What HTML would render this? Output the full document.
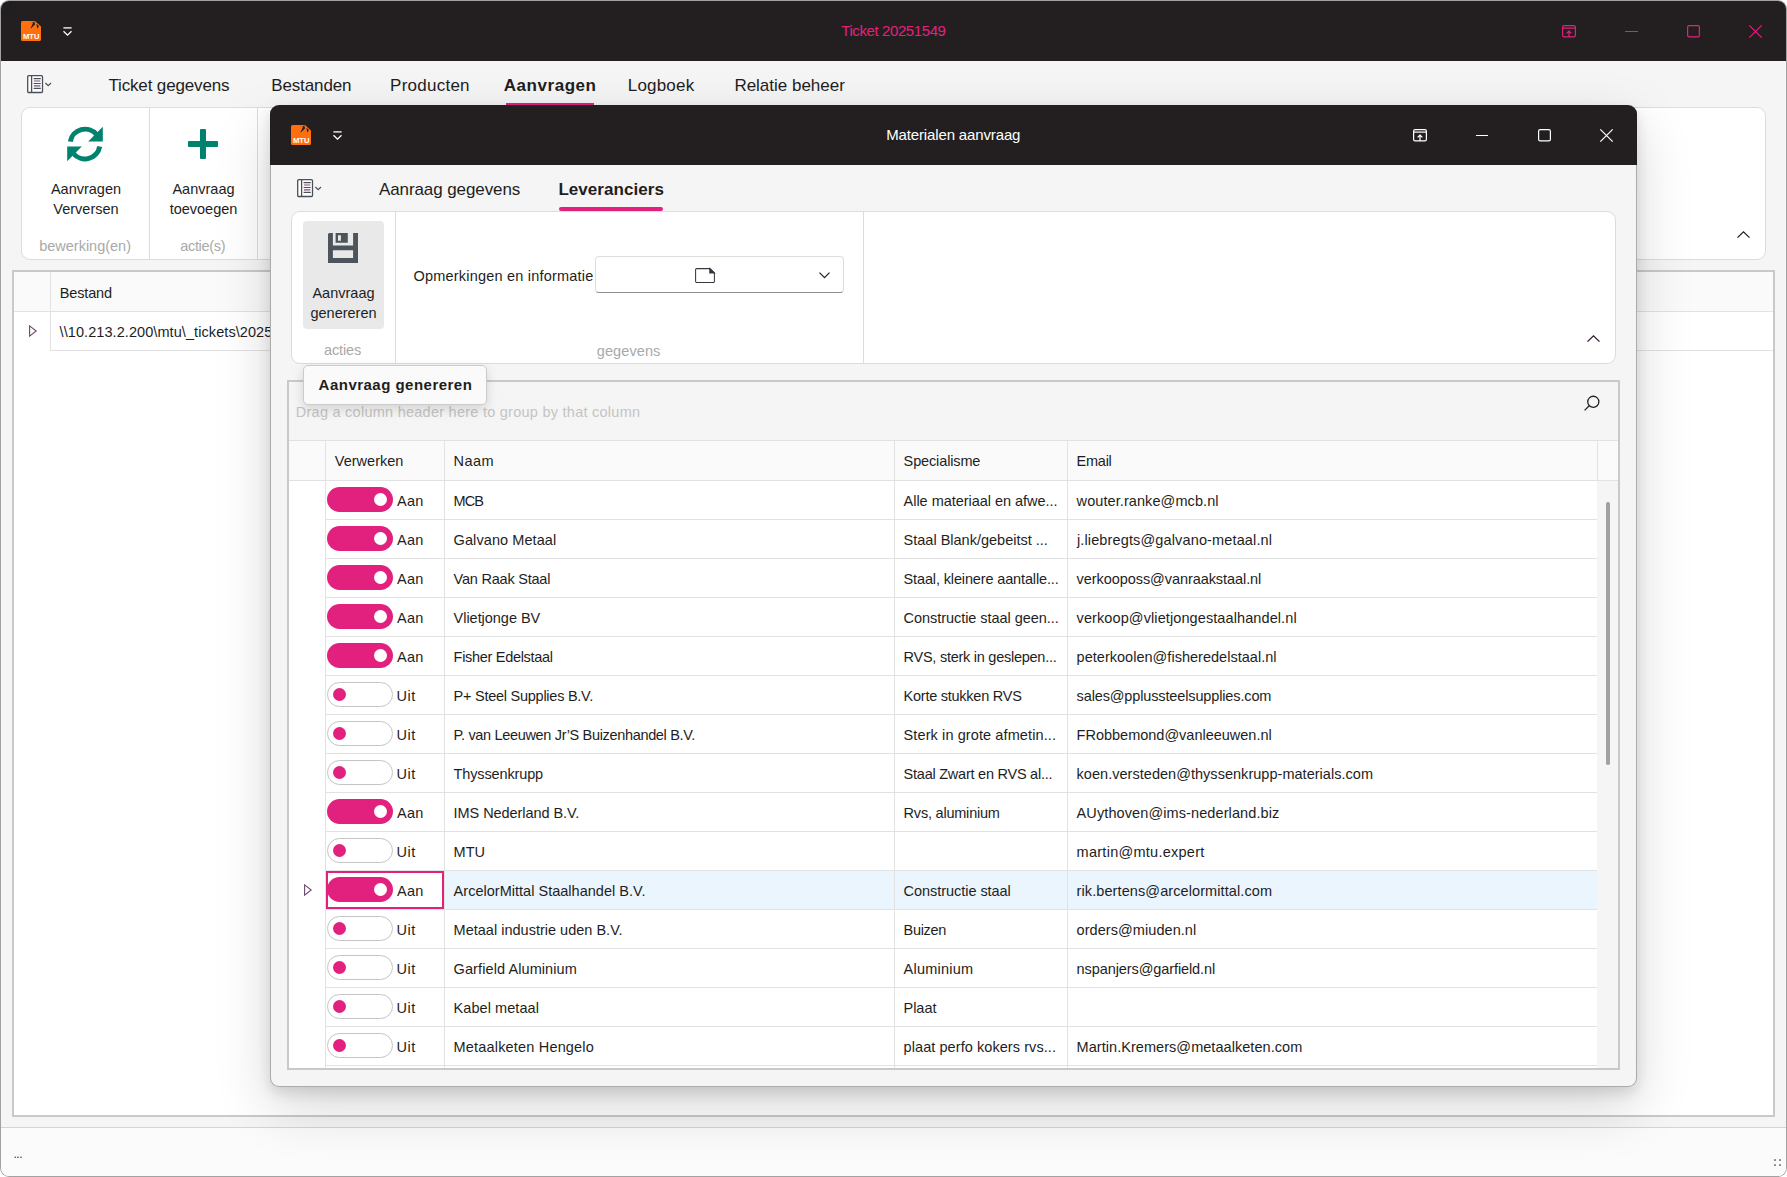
<!DOCTYPE html><html><head><meta charset="utf-8"><title>Ticket 20251549</title><style>
*{box-sizing:border-box;margin:0;padding:0}
html,body{width:1787px;height:1177px;overflow:hidden;background:#fff}
body{position:relative;font-family:"Liberation Sans",sans-serif;color:#1e1e1e}
.a{position:absolute}
.t{position:absolute;white-space:pre}
svg{position:absolute;overflow:visible}
.hl{position:absolute;height:1px;background:#e2e2e2}
.vl{position:absolute;width:1px;background:#e2e2e2}
.tg{position:absolute;width:66px;height:25px;border-radius:13px}
.tg.on{background:#e2217f}
.tg.off{background:#fff;border:1px solid #c4c4c4}
.kn{position:absolute;width:13px;height:13px;border-radius:50%}
</style></head><body>
<div class="a" style="left:0;top:0;width:1787px;height:1177px;border-radius:9px;background:#a2a2a2"></div>
<div class="a" style="left:1px;top:1px;width:1785px;height:1175px;border-radius:8px;background:#f5f5f5;overflow:hidden">
<div class="a" style="left:0;top:0;width:1785px;height:59.5px;background:#231f20"></div>
</div>
<svg style="left:21px;top:21px" width="20" height="20" viewBox="0 0 20 20"><path d="M1.6 0H14L20 5.6V18.4a1.6 1.6 0 0 1-1.6 1.6H1.6A1.6 1.6 0 0 1 0 18.4V1.6A1.6 1.6 0 0 1 1.6 0Z" fill="#ff6f0d"/><path d="M9.2 8 12.2 1.6 9.8 2.2 13.4 0.6 14 3.4ZM16.2 7.4 15.4 2.8 17.4 4.6 17.8 5.6Z" fill="#231f20"/><text x="10.2" y="17.9" font-family="Liberation Sans" font-weight="700" font-size="7.6" fill="#fff" text-anchor="middle" textLength="16.6" lengthAdjust="spacingAndGlyphs">MTU</text></svg>
<svg style="left:62.5px;top:26.8px" width="9" height="9" viewBox="0 0 9 9" fill="none" stroke="#fff" stroke-width="1.3"><path d="M0.4 0.9H8.6"/><path d="M0.5 4.2 4.5 8.1 8.5 4.2"/></svg>
<div class="t" style="left:841.2px;top:19.3px;height:24px;line-height:24px;font-size:15px;color:#e2217f;letter-spacing:-0.399px;">Ticket 20251549</div>
<svg style="left:1562px;top:25.2px" width="14" height="12.5" viewBox="0 0 14 12.5" fill="none" stroke="#e2217f" stroke-width="1.2"><rect x="0.6" y="0.6" width="12.8" height="11.3" rx="1.6"/><path d="M0.6 3.1H13.4"/><path d="M7 12V6.2M4.6 8.4 7 6 9.4 8.4"/></svg>
<div class="a" style="left:1625.3px;top:31.2px;width:12.6px;height:1.3px;background:#e2217f"></div>
<svg style="left:1687.2px;top:25.2px" width="13" height="12.5" viewBox="0 0 13 12.5" fill="none" stroke="#e2217f" stroke-width="1.2"><rect x="0.6" y="0.6" width="11.8" height="11.3" rx="1.6"/></svg>
<svg style="left:1749.2px;top:24.7px" width="13" height="13" viewBox="0 0 13 13" fill="none" stroke="#e2217f" stroke-width="1.2"><path d="M0.3 0.3 12.7 12.7M12.7 0.3 0.3 12.7"/></svg>
<svg style="left:27px;top:75px" width="25" height="18" viewBox="0 0 25 18" fill="none"><rect x="0.7" y="0.7" width="14.8" height="16.8" rx="1.1" fill="#fff" stroke="#4a5057" stroke-width="1.3"/><path d="M4.6 0.6V17.4" stroke="#4a5057" stroke-width="1.3"/><path d="M6.6 3.6H13.8M6.6 8.5H13.8M6.6 13.4H13.8" stroke="#4a5057" stroke-width="1.1"/><path d="M6.9 6H13.3M6.9 10.9H13.3" stroke="#7a4a7a" stroke-width="1.1"/><path d="M18.4 8 21.2 10.7 24 8" stroke="#5a4a5f" stroke-width="1.2"/></svg>
<div class="t" style="left:108.4px;top:74.0px;height:24px;line-height:24px;font-size:17px;letter-spacing:-0.138px;">Ticket gegevens</div>
<div class="t" style="left:271.2px;top:74.0px;height:24px;line-height:24px;font-size:17px;letter-spacing:-0.119px;">Bestanden</div>
<div class="t" style="left:390.1px;top:74.0px;height:24px;line-height:24px;font-size:17px;letter-spacing:0.243px;">Producten</div>
<div class="t" style="left:503.8px;top:74.0px;height:24px;line-height:24px;font-size:17px;font-weight:700;letter-spacing:0.534px;">Aanvragen</div>
<div class="t" style="left:627.8px;top:74.0px;height:24px;line-height:24px;font-size:17px;letter-spacing:0.185px;">Logboek</div>
<div class="t" style="left:734.4px;top:74.0px;height:24px;line-height:24px;font-size:17px;letter-spacing:-0.01px;">Relatie beheer</div>
<div class="a" style="left:505.5px;top:102.8px;width:88px;height:3px;background:#e2217f"></div>
<div class="a" style="left:21px;top:107px;width:1745px;height:153px;background:#fff;border:1px solid #dcdcdc;border-radius:9px"></div>
<div class="vl" style="left:149px;top:108px;height:151px;background:#dcdcdc"></div>
<div class="vl" style="left:257px;top:108px;height:151px;background:#dcdcdc"></div>
<svg style="left:67px;top:126px" width="36" height="36" viewBox="0 0 36 36"><path d="M3.3 15.6A15 15 0 0 1 29.6 8.6" fill="none" stroke="#00826f" stroke-width="5"/><path d="M35.8 0.8V15.6H21.2Z" fill="#00826f"/><path d="M32.7 20.5A15 15 0 0 1 6.4 27.5" fill="none" stroke="#00826f" stroke-width="5"/><path d="M0.2 35.3V20.5H14.8Z" fill="#00826f"/></svg>
<div class="a" style="left:188px;top:141.3px;width:30px;height:5.5px;border-radius:1px;background:#00826f"></div>
<div class="a" style="left:200.2px;top:129px;width:5.5px;height:30px;border-radius:1px;background:#00826f"></div>
<div class="t" style="left:22px;top:177.0px;height:24px;line-height:24px;font-size:14.5px;width:128px;text-align:center;">Aanvragen</div>
<div class="t" style="left:22px;top:196.7px;height:24px;line-height:24px;font-size:14.5px;width:128px;text-align:center;">Verversen</div>
<div class="t" style="left:150px;top:177.0px;height:24px;line-height:24px;font-size:14.5px;width:107px;text-align:center;">Aanvraag</div>
<div class="t" style="left:150px;top:196.7px;height:24px;line-height:24px;font-size:14.5px;width:107px;text-align:center;">toevoegen</div>
<div class="t" style="left:39.2px;top:234.0px;height:24px;line-height:24px;font-size:14.5px;color:#a9a9a9;letter-spacing:-0.005px;">bewerking(en)</div>
<div class="t" style="left:180.2px;top:234.0px;height:24px;line-height:24px;font-size:14.5px;color:#a9a9a9;letter-spacing:-0.302px;">actie(s)</div>
<svg style="left:1736.5px;top:230.8px" width="13" height="7" viewBox="0 0 13 7" fill="none" stroke="#2a1a2a" stroke-width="1.3"><path d="M0.5 6.6 6.5 0.8 12.5 6.6"/></svg>
<div class="a" style="left:12px;top:270px;width:1763px;height:847px;background:#fff;border:2px solid #c9c9c9"></div>
<div class="a" style="left:14px;top:272px;width:1759px;height:39px;background:#fafafa"></div>
<div class="hl" style="left:14px;top:311px;width:1759px"></div>
<div class="vl" style="left:50px;top:272px;height:79px"></div>
<div class="hl" style="left:50px;top:350px;width:1723px"></div>
<div class="t" style="left:59.8px;top:280.6px;height:24px;line-height:24px;font-size:14.5px;letter-spacing:-0.164px;">Bestand</div>
<div class="t" style="left:59.6px;top:320.2px;height:24px;line-height:24px;font-size:14.5px;letter-spacing:0.075px;">\\10.213.2.200\mtu\_tickets\2025</div>
<svg style="left:28.5px;top:325px" width="8" height="12" viewBox="0 0 8 12" fill="none" stroke="#6a4a6a" stroke-width="1.1"><path d="M0.6 0.9 7.2 6 0.6 11.1Z"/></svg>
<div class="a" style="left:1px;top:1127px;width:1785px;height:1px;background:#d4d4d4"></div>
<div class="a" style="left:1px;top:1128px;width:1785px;height:48px;background:#fbfbfb;border-radius:0 0 8px 8px"></div>
<div class="t" style="left:13.5px;top:1142.3px;height:24px;line-height:24px;font-size:12px;color:#333;letter-spacing:-0.5px;">...</div>
<div class="a" style="left:1774.4px;top:1159px;width:2px;height:2px;background:#8c8c8c;border-radius:0.5px"></div>
<div class="a" style="left:1774.4px;top:1164px;width:2px;height:2px;background:#8c8c8c;border-radius:0.5px"></div>
<div class="a" style="left:1779px;top:1159px;width:2px;height:2px;background:#8c8c8c;border-radius:0.5px"></div>
<div class="a" style="left:1779px;top:1164px;width:2px;height:2px;background:#8c8c8c;border-radius:0.5px"></div>
<div class="a" style="left:270px;top:105px;width:1367px;height:982px;border-radius:9px;background:#ababab;box-shadow:0 6px 14px rgba(0,0,0,0.12),0 20px 56px rgba(0,0,0,0.16);overflow:hidden">
<div class="a" style="left:1px;top:0;width:1365px;height:981px;border-radius:8px;background:#f5f5f5"></div>
<div class="a" style="left:0;top:0;width:1367px;height:60px;background:#231f20"></div>
</div>
<svg style="left:291px;top:125px" width="20" height="20" viewBox="0 0 20 20"><path d="M1.6 0H14L20 5.6V18.4a1.6 1.6 0 0 1-1.6 1.6H1.6A1.6 1.6 0 0 1 0 18.4V1.6A1.6 1.6 0 0 1 1.6 0Z" fill="#ff6f0d"/><path d="M9.2 8 12.2 1.6 9.8 2.2 13.4 0.6 14 3.4ZM16.2 7.4 15.4 2.8 17.4 4.6 17.8 5.6Z" fill="#231f20"/><text x="10.2" y="17.9" font-family="Liberation Sans" font-weight="700" font-size="7.6" fill="#fff" text-anchor="middle" textLength="16.6" lengthAdjust="spacingAndGlyphs">MTU</text></svg>
<svg style="left:332.5px;top:131px" width="9" height="9" viewBox="0 0 9 9" fill="none" stroke="#fff" stroke-width="1.3"><path d="M0.4 0.9H8.6"/><path d="M0.5 4.2 4.5 8.1 8.5 4.2"/></svg>
<div class="t" style="left:886.2px;top:123.4px;height:24px;line-height:24px;font-size:15px;color:#fff;letter-spacing:-0.138px;">Materialen aanvraag</div>
<svg style="left:1412.5px;top:129.2px" width="14" height="12.5" viewBox="0 0 14 12.5" fill="none" stroke="#fff" stroke-width="1.2"><rect x="0.6" y="0.6" width="12.8" height="11.3" rx="1.6"/><path d="M0.6 3.1H13.4"/><path d="M7 12V6.2M4.6 8.4 7 6 9.4 8.4"/></svg>
<div class="a" style="left:1475.8px;top:135.2px;width:12.6px;height:1.3px;background:#fff"></div>
<svg style="left:1537.7px;top:129.2px" width="13" height="12.5" viewBox="0 0 13 12.5" fill="none" stroke="#fff" stroke-width="1.2"><rect x="0.6" y="0.6" width="11.8" height="11.3" rx="1.6"/></svg>
<svg style="left:1599.7px;top:128.7px" width="13" height="13" viewBox="0 0 13 13" fill="none" stroke="#fff" stroke-width="1.2"><path d="M0.3 0.3 12.7 12.7M12.7 0.3 0.3 12.7"/></svg>
<svg style="left:297px;top:179px" width="25" height="18" viewBox="0 0 25 18" fill="none"><rect x="0.7" y="0.7" width="14.8" height="16.8" rx="1.1" fill="#fff" stroke="#4a5057" stroke-width="1.3"/><path d="M4.6 0.6V17.4" stroke="#4a5057" stroke-width="1.3"/><path d="M6.6 3.6H13.8M6.6 8.5H13.8M6.6 13.4H13.8" stroke="#4a5057" stroke-width="1.1"/><path d="M6.9 6H13.3M6.9 10.9H13.3" stroke="#7a4a7a" stroke-width="1.1"/><path d="M18.4 8 21.2 10.7 24 8" stroke="#5a4a5f" stroke-width="1.2"/></svg>
<div class="t" style="left:379px;top:177.8px;height:24px;line-height:24px;font-size:17px;letter-spacing:-0.099px;">Aanraag gegevens</div>
<div class="t" style="left:558.4px;top:177.8px;height:24px;line-height:24px;font-size:17px;font-weight:700;letter-spacing:0.049px;">Leveranciers</div>
<div class="a" style="left:559px;top:207px;width:103.5px;height:4px;border-radius:2px;background:#e2217f"></div>
<div class="a" style="left:291px;top:211px;width:1325px;height:153px;background:#fff;border:1px solid #dcdcdc;border-radius:9px"></div>
<div class="vl" style="left:395px;top:212px;height:151px;background:#dcdcdc"></div>
<div class="vl" style="left:863px;top:212px;height:151px;background:#dcdcdc"></div>
<div class="a" style="left:303px;top:221px;width:81px;height:108px;background:#e9e9e9;border-radius:4px"></div>
<svg style="left:328px;top:233px" width="30" height="30" viewBox="0 0 30 30"><path fill-rule="evenodd" fill="#4d545c" d="M1 0H30V30H0V1ZM4.9 0V12.5H25.1V0ZM4.9 17.2V25.1H25.1V17.2Z"/><path fill-rule="evenodd" fill="#4d545c" d="M7.6 0H19.8V9.8H7.6ZM10 2.2V7.8H12.9V2.2Z"/></svg>
<div class="t" style="left:303px;top:281.2px;height:24px;line-height:24px;font-size:14.5px;width:81px;text-align:center;">Aanvraag</div>
<div class="t" style="left:303px;top:300.8px;height:24px;line-height:24px;font-size:14.5px;width:81px;text-align:center;">genereren</div>
<div class="t" style="left:324px;top:338.2px;height:24px;line-height:24px;font-size:14.5px;color:#a9a9a9;letter-spacing:-0.112px;">acties</div>
<div class="t" style="left:413.5px;top:263.8px;height:24px;line-height:24px;font-size:14.5px;letter-spacing:0.205px;">Opmerkingen en informatie</div>
<div class="t" style="left:596.8px;top:338.5px;height:24px;line-height:24px;font-size:14.5px;color:#a9a9a9;letter-spacing:0.092px;">gegevens</div>
<div class="a" style="left:595px;top:256px;width:249px;height:37px;background:#fff;border:1px solid #dedede;border-bottom-color:#8f8f8f;border-radius:4px"></div>
<svg style="left:695px;top:267.5px" width="20" height="15" viewBox="0 0 20 15" fill="none" stroke="#3a3540" stroke-width="1.05"><path d="M1.6 0.6H14.8L19.4 5V13.2a1.2 1.2 0 0 1-1.2 1.2H1.8A1.2 1.2 0 0 1 0.6 13.2V1.6A1 1 0 0 1 1.6 0.6Z"/><path d="M14.8 0.6V5H19.4Z" fill="#3a3540"/></svg>
<svg style="left:819.3px;top:272px" width="11" height="6.5" viewBox="0 0 11 6.5" fill="none" stroke="#222" stroke-width="1.3"><path d="M0.5 0.6 5.5 5.6 10.5 0.6"/></svg>
<svg style="left:1586.5px;top:334.8px" width="13" height="7" viewBox="0 0 13 7" fill="none" stroke="#2a1a2a" stroke-width="1.3"><path d="M0.5 6.6 6.5 0.8 12.5 6.6"/></svg>
<div class="a" style="left:287px;top:380px;width:1333px;height:690px;background:#f5f5f5;border:2px solid #c9c9c9"></div>
<div class="t" style="left:295.8px;top:400.0px;height:24px;line-height:24px;font-size:14.5px;color:#c4c4c4;letter-spacing:0.253px;">Drag a column header here to group by that column</div>
<svg style="left:1584px;top:395px" width="17" height="17" viewBox="0 0 17 17" fill="none" stroke="#222" stroke-width="1.3"><circle cx="9.3" cy="6.8" r="5.55"/><path d="M5.2 10.8 0.6 15.4"/></svg>
<div class="hl" style="left:289px;top:440px;width:1329px"></div>
<div class="a" style="left:289px;top:441px;width:1329px;height:39px;background:#fafafa"></div>
<div class="hl" style="left:289px;top:480px;width:1329px"></div>
<div class="a" style="left:289px;top:481px;width:1308px;height:587px;background:#fff"></div>
<div class="hl" style="left:325px;top:519px;width:1272px"></div>
<div class="tg on" style="left:327px;top:487px"><div class="kn" style="left:47px;top:6px;background:#fff"></div></div>
<div class="t" style="left:397px;top:488.6px;height:24px;line-height:24px;font-size:14.5px;letter-spacing:0.31px;">Aan</div>
<div class="t" style="left:453.6px;top:488.6px;height:24px;line-height:24px;font-size:14.5px;letter-spacing:-0.901px;">MCB</div>
<div class="t" style="left:903.6px;top:488.6px;height:24px;line-height:24px;font-size:14.5px;letter-spacing:-0.03px;">Alle materiaal en afwe...</div>
<div class="t" style="left:1076.6px;top:488.6px;height:24px;line-height:24px;font-size:14.5px;letter-spacing:0.082px;">wouter.ranke@mcb.nl</div>
<div class="hl" style="left:325px;top:558px;width:1272px"></div>
<div class="tg on" style="left:327px;top:526px"><div class="kn" style="left:47px;top:6px;background:#fff"></div></div>
<div class="t" style="left:397px;top:527.6px;height:24px;line-height:24px;font-size:14.5px;letter-spacing:0.31px;">Aan</div>
<div class="t" style="left:453.6px;top:527.6px;height:24px;line-height:24px;font-size:14.5px;letter-spacing:0.082px;">Galvano Metaal</div>
<div class="t" style="left:903.6px;top:527.6px;height:24px;line-height:24px;font-size:14.5px;letter-spacing:-0.002px;">Staal Blank/gebeitst ...</div>
<div class="t" style="left:1076.9px;top:527.6px;height:24px;line-height:24px;font-size:14.5px;letter-spacing:0.139px;">j.liebregts@galvano-metaal.nl</div>
<div class="hl" style="left:325px;top:597px;width:1272px"></div>
<div class="tg on" style="left:327px;top:565px"><div class="kn" style="left:47px;top:6px;background:#fff"></div></div>
<div class="t" style="left:397px;top:566.6px;height:24px;line-height:24px;font-size:14.5px;letter-spacing:0.31px;">Aan</div>
<div class="t" style="left:453.6px;top:566.6px;height:24px;line-height:24px;font-size:14.5px;letter-spacing:-0.22px;">Van Raak Staal</div>
<div class="t" style="left:903.6px;top:566.6px;height:24px;line-height:24px;font-size:14.5px;letter-spacing:-0.141px;">Staal, kleinere aantalle...</div>
<div class="t" style="left:1076.6px;top:566.6px;height:24px;line-height:24px;font-size:14.5px;letter-spacing:-0.067px;">verkooposs@vanraakstaal.nl</div>
<div class="hl" style="left:325px;top:636px;width:1272px"></div>
<div class="tg on" style="left:327px;top:604px"><div class="kn" style="left:47px;top:6px;background:#fff"></div></div>
<div class="t" style="left:397px;top:605.6px;height:24px;line-height:24px;font-size:14.5px;letter-spacing:0.31px;">Aan</div>
<div class="t" style="left:453.6px;top:605.6px;height:24px;line-height:24px;font-size:14.5px;letter-spacing:-0.036px;">Vlietjonge BV</div>
<div class="t" style="left:903.6px;top:605.6px;height:24px;line-height:24px;font-size:14.5px;letter-spacing:-0.052px;">Constructie staal geen...</div>
<div class="t" style="left:1076.6px;top:605.6px;height:24px;line-height:24px;font-size:14.5px;letter-spacing:0.096px;">verkoop@vlietjongestaalhandel.nl</div>
<div class="hl" style="left:325px;top:675px;width:1272px"></div>
<div class="tg on" style="left:327px;top:643px"><div class="kn" style="left:47px;top:6px;background:#fff"></div></div>
<div class="t" style="left:397px;top:644.6px;height:24px;line-height:24px;font-size:14.5px;letter-spacing:0.31px;">Aan</div>
<div class="t" style="left:453.6px;top:644.6px;height:24px;line-height:24px;font-size:14.5px;letter-spacing:-0.302px;">Fisher Edelstaal</div>
<div class="t" style="left:903.6px;top:644.6px;height:24px;line-height:24px;font-size:14.5px;letter-spacing:-0.258px;">RVS, sterk in geslepen...</div>
<div class="t" style="left:1076.6px;top:644.6px;height:24px;line-height:24px;font-size:14.5px;letter-spacing:0.021px;">peterkoolen@fisheredelstaal.nl</div>
<div class="hl" style="left:325px;top:714px;width:1272px"></div>
<div class="tg off" style="left:327px;top:682px"><div class="kn" style="left:5.2px;top:5px;background:#e2217f"></div></div>
<div class="t" style="left:396.6px;top:683.6px;height:24px;line-height:24px;font-size:14.5px;letter-spacing:0.499px;">Uit</div>
<div class="t" style="left:453.6px;top:683.6px;height:24px;line-height:24px;font-size:14.5px;letter-spacing:-0.254px;">P+ Steel Supplies B.V.</div>
<div class="t" style="left:903.6px;top:683.6px;height:24px;line-height:24px;font-size:14.5px;letter-spacing:-0.251px;">Korte stukken RVS</div>
<div class="t" style="left:1076.6px;top:683.6px;height:24px;line-height:24px;font-size:14.5px;letter-spacing:-0.135px;">sales@pplussteelsupplies.com</div>
<div class="hl" style="left:325px;top:753px;width:1272px"></div>
<div class="tg off" style="left:327px;top:721px"><div class="kn" style="left:5.2px;top:5px;background:#e2217f"></div></div>
<div class="t" style="left:396.6px;top:722.6px;height:24px;line-height:24px;font-size:14.5px;letter-spacing:0.499px;">Uit</div>
<div class="t" style="left:453.6px;top:722.6px;height:24px;line-height:24px;font-size:14.5px;letter-spacing:-0.334px;">P. van Leeuwen Jr’S Buizenhandel B.V.</div>
<div class="t" style="left:903.6px;top:722.6px;height:24px;line-height:24px;font-size:14.5px;letter-spacing:0.101px;">Sterk in grote afmetin...</div>
<div class="t" style="left:1076.6px;top:722.6px;height:24px;line-height:24px;font-size:14.5px;letter-spacing:-0.007px;">FRobbemond@vanleeuwen.nl</div>
<div class="hl" style="left:325px;top:792px;width:1272px"></div>
<div class="tg off" style="left:327px;top:760px"><div class="kn" style="left:5.2px;top:5px;background:#e2217f"></div></div>
<div class="t" style="left:396.6px;top:761.6px;height:24px;line-height:24px;font-size:14.5px;letter-spacing:0.499px;">Uit</div>
<div class="t" style="left:453.6px;top:761.6px;height:24px;line-height:24px;font-size:14.5px;letter-spacing:-0.141px;">Thyssenkrupp</div>
<div class="t" style="left:903.6px;top:761.6px;height:24px;line-height:24px;font-size:14.5px;letter-spacing:-0.241px;">Staal Zwart en RVS al...</div>
<div class="t" style="left:1076.6px;top:761.6px;height:24px;line-height:24px;font-size:14.5px;letter-spacing:0.031px;">koen.versteden@thyssenkrupp-materials.com</div>
<div class="hl" style="left:325px;top:831px;width:1272px"></div>
<div class="tg on" style="left:327px;top:799px"><div class="kn" style="left:47px;top:6px;background:#fff"></div></div>
<div class="t" style="left:397px;top:800.6px;height:24px;line-height:24px;font-size:14.5px;letter-spacing:0.31px;">Aan</div>
<div class="t" style="left:453.6px;top:800.6px;height:24px;line-height:24px;font-size:14.5px;letter-spacing:-0.064px;">IMS Nederland B.V.</div>
<div class="t" style="left:903.6px;top:800.6px;height:24px;line-height:24px;font-size:14.5px;letter-spacing:-0.214px;">Rvs, aluminium</div>
<div class="t" style="left:1076.6px;top:800.6px;height:24px;line-height:24px;font-size:14.5px;letter-spacing:0.101px;">AUythoven@ims-nederland.biz</div>
<div class="hl" style="left:325px;top:870px;width:1272px"></div>
<div class="tg off" style="left:327px;top:838px"><div class="kn" style="left:5.2px;top:5px;background:#e2217f"></div></div>
<div class="t" style="left:396.6px;top:839.6px;height:24px;line-height:24px;font-size:14.5px;letter-spacing:0.499px;">Uit</div>
<div class="t" style="left:453.6px;top:839.6px;height:24px;line-height:24px;font-size:14.5px;letter-spacing:-0.045px;">MTU</div>
<div class="t" style="left:1076.6px;top:839.6px;height:24px;line-height:24px;font-size:14.5px;letter-spacing:0.264px;">martin@mtu.expert</div>
<div class="a" style="left:445px;top:871px;width:1152px;height:38px;background:#ebf5fd"></div>
<div class="hl" style="left:325px;top:909px;width:1272px"></div>
<div class="tg on" style="left:327px;top:877px"><div class="kn" style="left:47px;top:6px;background:#fff"></div></div>
<div class="t" style="left:397px;top:878.6px;height:24px;line-height:24px;font-size:14.5px;letter-spacing:0.31px;">Aan</div>
<div class="t" style="left:453.6px;top:878.6px;height:24px;line-height:24px;font-size:14.5px;letter-spacing:0.018px;">ArcelorMittal Staalhandel B.V.</div>
<div class="t" style="left:903.6px;top:878.6px;height:24px;line-height:24px;font-size:14.5px;letter-spacing:-0.048px;">Constructie staal</div>
<div class="t" style="left:1076.6px;top:878.6px;height:24px;line-height:24px;font-size:14.5px;letter-spacing:0.094px;">rik.bertens@arcelormittal.com</div>
<div class="hl" style="left:325px;top:948px;width:1272px"></div>
<div class="tg off" style="left:327px;top:916px"><div class="kn" style="left:5.2px;top:5px;background:#e2217f"></div></div>
<div class="t" style="left:396.6px;top:917.6px;height:24px;line-height:24px;font-size:14.5px;letter-spacing:0.499px;">Uit</div>
<div class="t" style="left:453.6px;top:917.6px;height:24px;line-height:24px;font-size:14.5px;letter-spacing:0.007px;">Metaal industrie uden B.V.</div>
<div class="t" style="left:903.6px;top:917.6px;height:24px;line-height:24px;font-size:14.5px;letter-spacing:-0.342px;">Buizen</div>
<div class="t" style="left:1076.6px;top:917.6px;height:24px;line-height:24px;font-size:14.5px;letter-spacing:0.062px;">orders@miuden.nl</div>
<div class="hl" style="left:325px;top:987px;width:1272px"></div>
<div class="tg off" style="left:327px;top:955px"><div class="kn" style="left:5.2px;top:5px;background:#e2217f"></div></div>
<div class="t" style="left:396.6px;top:956.6px;height:24px;line-height:24px;font-size:14.5px;letter-spacing:0.499px;">Uit</div>
<div class="t" style="left:453.6px;top:956.6px;height:24px;line-height:24px;font-size:14.5px;letter-spacing:0.091px;">Garfield Aluminium</div>
<div class="t" style="left:903.6px;top:956.6px;height:24px;line-height:24px;font-size:14.5px;letter-spacing:0.231px;">Aluminium</div>
<div class="t" style="left:1076.6px;top:956.6px;height:24px;line-height:24px;font-size:14.5px;letter-spacing:-0.092px;">nspanjers@garfield.nl</div>
<div class="hl" style="left:325px;top:1026px;width:1272px"></div>
<div class="tg off" style="left:327px;top:994px"><div class="kn" style="left:5.2px;top:5px;background:#e2217f"></div></div>
<div class="t" style="left:396.6px;top:995.6px;height:24px;line-height:24px;font-size:14.5px;letter-spacing:0.499px;">Uit</div>
<div class="t" style="left:453.6px;top:995.6px;height:24px;line-height:24px;font-size:14.5px;letter-spacing:0.063px;">Kabel metaal</div>
<div class="t" style="left:903.6px;top:995.6px;height:24px;line-height:24px;font-size:14.5px;letter-spacing:-0.057px;">Plaat</div>
<div class="hl" style="left:325px;top:1065px;width:1272px"></div>
<div class="tg off" style="left:327px;top:1033px"><div class="kn" style="left:5.2px;top:5px;background:#e2217f"></div></div>
<div class="t" style="left:396.6px;top:1034.6px;height:24px;line-height:24px;font-size:14.5px;letter-spacing:0.499px;">Uit</div>
<div class="t" style="left:453.6px;top:1034.6px;height:24px;line-height:24px;font-size:14.5px;letter-spacing:0.177px;">Metaalketen Hengelo</div>
<div class="t" style="left:903.6px;top:1034.6px;height:24px;line-height:24px;font-size:14.5px;letter-spacing:0.068px;">plaat perfo kokers rvs...</div>
<div class="t" style="left:1076.6px;top:1034.6px;height:24px;line-height:24px;font-size:14.5px;letter-spacing:0.048px;">Martin.Kremers@metaalketen.com</div>
<div class="vl" style="left:325px;top:441px;height:627px"></div>
<div class="vl" style="left:444px;top:441px;height:627px"></div>
<div class="vl" style="left:894px;top:441px;height:627px"></div>
<div class="vl" style="left:1067px;top:441px;height:627px"></div>
<div class="vl" style="left:1597px;top:441px;height:39px"></div>
<div class="a" style="left:1597px;top:481px;width:21px;height:587px;background:#f5f5f5"></div>
<div class="a" style="left:1606px;top:502px;width:3.5px;height:263px;background:#a1a1a1;border-radius:1.75px"></div>
<div class="t" style="left:334.8px;top:449.2px;height:24px;line-height:24px;font-size:14.5px;letter-spacing:0.015px;">Verwerken</div>
<div class="t" style="left:453.6px;top:449.2px;height:24px;line-height:24px;font-size:14.5px;letter-spacing:0.415px;">Naam</div>
<div class="t" style="left:903.6px;top:449.2px;height:24px;line-height:24px;font-size:14.5px;letter-spacing:-0.134px;">Specialisme</div>
<div class="t" style="left:1076.6px;top:449.2px;height:24px;line-height:24px;font-size:14.5px;letter-spacing:-0.258px;">Email</div>
<div class="a" style="left:326px;top:871px;width:118px;height:38px;border:2px solid #e2217f"></div>
<svg style="left:303.5px;top:884.3px" width="8" height="12" viewBox="0 0 8 12" fill="none" stroke="#6a4a6a" stroke-width="1.1"><path d="M0.6 0.9 7.2 6 0.6 11.1Z"/></svg>
<div class="a" style="left:303px;top:365px;width:184px;height:40px;background:#fafafa;border:1px solid #cbcbcb;border-radius:5px;box-shadow:0 4px 12px rgba(0,0,0,0.14)"></div>
<div class="t" style="left:318.6px;top:373.0px;height:24px;line-height:24px;font-size:15px;font-weight:700;letter-spacing:0.482px;">Aanvraag genereren</div>
</body></html>
